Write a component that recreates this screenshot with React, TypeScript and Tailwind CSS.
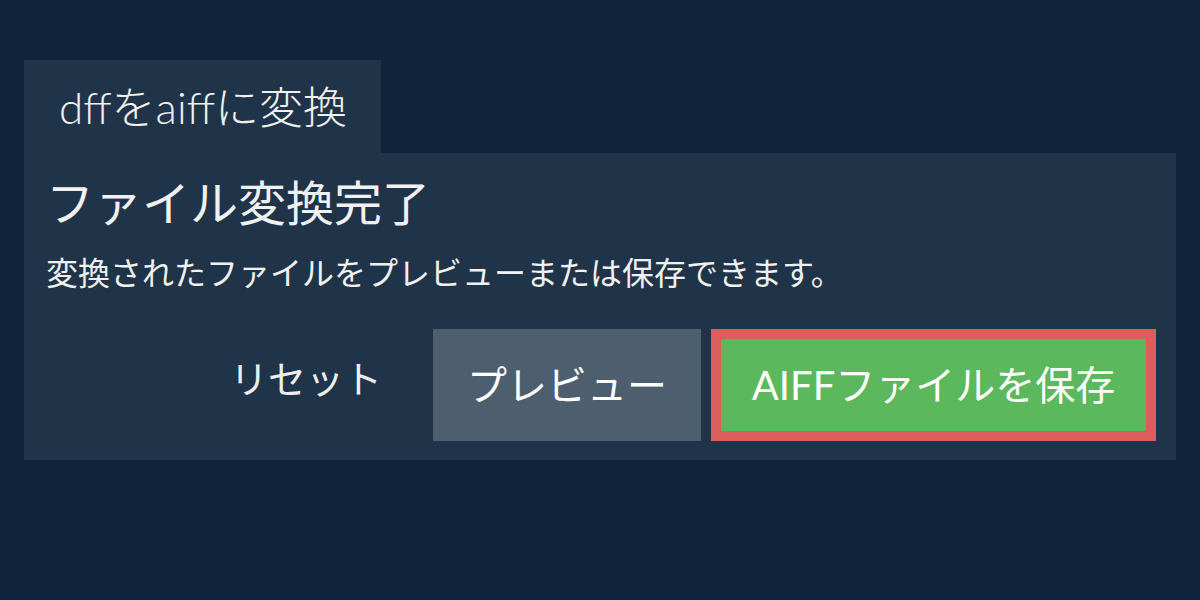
const jp = { fontFamily: 'Lato, "Noto Sans CJK JP", sans-serif' };

export default function App() {
  return (
    <div className="min-h-[600px] w-[1200px] bg-[#11233a] px-6 pt-[60px] text-[#f1f1f1]" style={jp}>
      <div className="flex h-[93px] w-[357px] items-center bg-[#203449] pl-[35px]">
        <span className="text-[44px] font-light leading-none">dffをaiffに変換</span>
      </div>
      <div className="flex h-[307px] flex-col bg-[#203449] pl-[22px] pr-[20px] pt-[20px]">
        <h1 className="text-[48px] font-normal leading-[60px]">ファイル変換完了</h1>
        <p className="mt-[20px] text-[32px] leading-[40px]">変換されたファイルをプレビューまたは保存できます。</p>
        <div className="mt-[36px] flex items-center justify-end">
          <button className="mr-[51px] pb-[14px] text-[38px] text-[#eeeeee]">リセット</button>
          <button className="flex h-[112px] w-[268px] items-center justify-center bg-[#4d5e6e] text-[40px] text-white">
            プレビュー
          </button>
          <button className="ml-[10px] flex h-[112px] w-[445px] items-center justify-center border-[10px] border-[#db5e5c] bg-[#5cb85c] text-[40px] text-white">
            AIFFファイルを保存
          </button>
        </div>
      </div>
    </div>
  );
}
